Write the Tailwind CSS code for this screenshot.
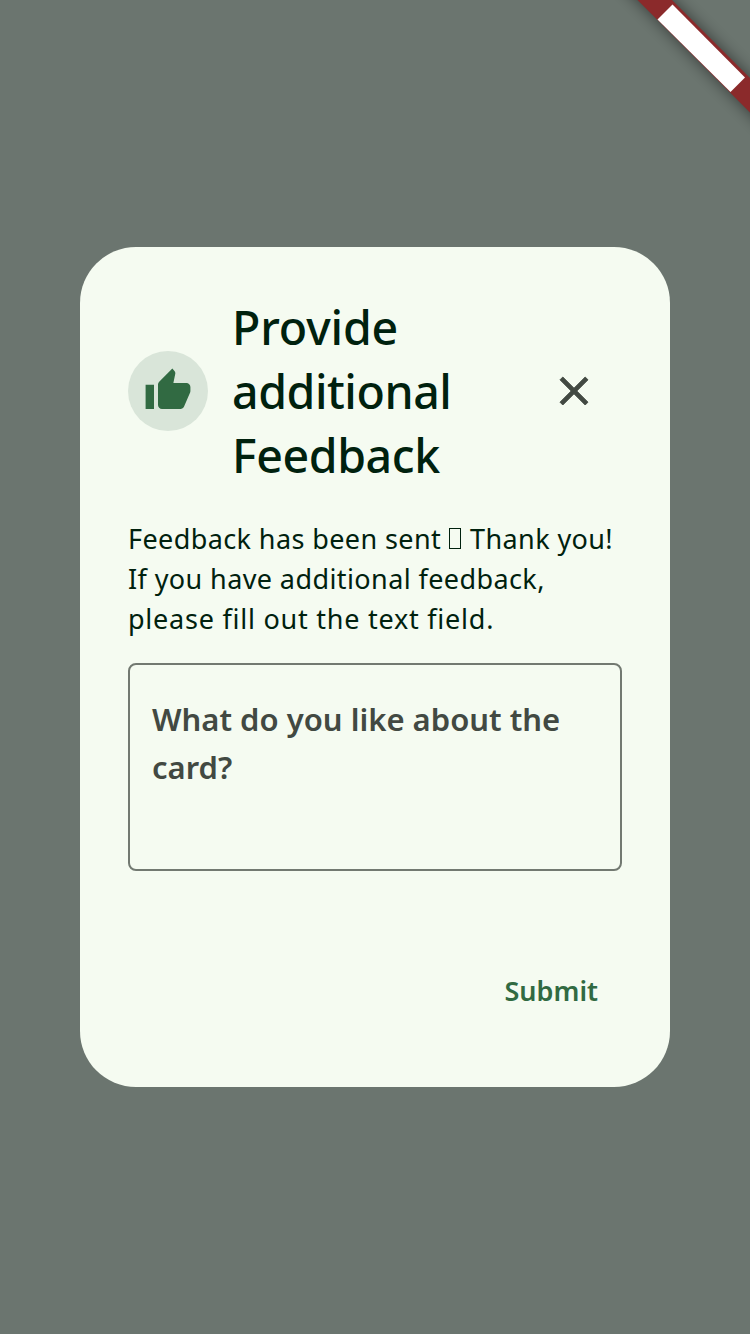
<!DOCTYPE html>
<html lang="en">
<head>
<meta charset="utf-8">
<title>Provide additional Feedback</title>
<script src="https://cdn.jsdelivr.net/npm/@tailwindcss/browser@4"></script>
</head>
<body class="relative flex h-[1334px] w-[750px] items-center justify-center overflow-hidden bg-[#6b756f] font-['Noto_Sans',sans-serif] text-[#00210e]">
  <svg class="absolute top-0 right-0" width="160" height="160" viewBox="590 0 160 160">
    <defs><filter id="s" x="-30%" y="-30%" width="160%" height="160%"><feGaussianBlur stdDeviation="8"/></filter></defs>
    <path d="M597.5 -40L632 -40L790 118L790 152.500Z" fill="#000" fill-opacity=".5" filter="url(#s)"/>
    <path d="M597.500 -40L632 -40L790 118L790 152.500Z" fill="#8b2a2b"/>
    <path d="M672.500 4.500L745 77.500L730.500 92L657.500 19.500Z" fill="#fff"/>
  </svg>

  <main class="flex h-[840px] w-[590px] flex-col rounded-[56px] bg-[#f5fbf1] px-12 pt-12">
    <header class="flex h-48 items-center">
      <div class="flex size-20 shrink-0 items-center justify-center rounded-full bg-[#d9e5d9]">
        <svg width="48" height="48" viewBox="0 0 24 24" fill="#316a42"><path d="M.8 21h4.200V8.900H.8v12.100zm22.400-11c0-1.100-.9-2-2-2h-6.510l.95-4.570.03-.32c0-.41-.17-.79-.44-1.060L14.170 .8 7.590 7.400C7.220 7.760 7 8.260 7 8.800v10.200c0 1.100.9 2 2 2h9.200c.83 0 1.540-.5 1.840-1.220l3.020-7.050c.09-.23.14-.47.14-.73v-2z"/></svg>
      </div>
      <h1 class="ml-6 w-[318px] shrink-0 text-[46.5px] leading-[64px] font-medium whitespace-nowrap">
        <span class="block tracking-[-0.15px]">Provide</span>
        <span class="block tracking-[-0.45px]">additional</span>
        <span class="block tracking-[-0.4px]">Feedback</span>
      </h1>
      <button class="flex size-12 shrink-0 items-center justify-center" aria-label="Close">
        <svg width="48" height="48" viewBox="0 0 24 24" fill="#424942" stroke="#424942" stroke-width=".45"><path d="M19 6.410L17.590 5 12 10.590 6.410 5 5 6.410 10.590 12 5 17.590 6.410 19 12 13.410 17.590 19 19 17.590 13.410 12z"/></svg>
      </button>
    </header>

    <p class="mt-8 text-[27px] leading-[40px] font-[450] whitespace-nowrap">
      <span class="block tracking-[0.4px]">Feedback has been sent <span class="mr-0.5 inline-block h-[21px] w-[12px] border border-[#00210e] align-[0px]"></span> Thank you!</span>
      <span class="block tracking-[0.4px]">If you have additional feedback,</span>
      <span class="block tracking-[0.76px]">please fill out the text field.</span>
    </p>

    <div class="mt-6 h-[208px] w-[494px] shrink-0 rounded-lg border-2 border-[#727971] px-[22px] pt-[30px] text-[31px] leading-[48px] font-semibold whitespace-nowrap text-[#424942]">
      <div>What do you like about the</div>
      <div>card?</div>
    </div>

    <footer class="mt-[80px] flex h-20 items-center justify-end pr-6">
      <button class="text-[27px] leading-10 font-semibold text-[#316a42]">Submit</button>
    </footer>
  </main>
</body>
</html>
